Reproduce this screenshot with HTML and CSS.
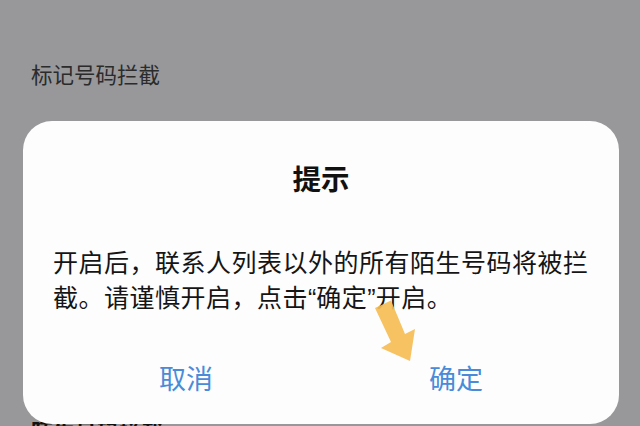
FILE: index.html
```html
<!DOCTYPE html>
<html lang="zh-CN">
<head>
<meta charset="utf-8">
<title>提示</title>
<link rel="stylesheet" href="styles.css">
</head>
<body>
<div class="screen">
  <div class="page">
    <div class="row-label">标记号码拦截</div>
    <div class="row-next">陌生号码拦截</div>
  </div>
  <div class="dialog">
    <div class="dialog-title">提示</div>
    <div class="dialog-body">开启后，联系人列表以外的所有陌生号码将被拦截。请谨慎开启，点击<span class="q">“</span>确定<span class="q">”</span>开启。</div>
    <div class="dialog-actions">
      <div class="btn">取消</div>
      <div class="btn">确定</div>
    </div>
  </div>
  <svg class="arrow" width="640" height="426" viewBox="0 0 640 426" aria-hidden="true">
    <polygon points="375,308 391,300.5 405,334 415,329 410,361 381,348 391,342" fill="#f5bd55" fill-opacity="0.92"/>
  </svg>
</div>
</body>
</html>
```

FILE: styles.css
```css
html, body {
  margin: 0;
  padding: 0;
}
body {
  font-family: "Noto Sans CJK SC", "Noto Sans", sans-serif;
  background: #98989a;
}
.screen {
  position: relative;
  width: 640px;
  height: 426px;
  overflow: hidden;
  background: #98989a;
}
.page {
  display: flex;
  flex-direction: column;
  padding: 60px 0 0 31px;
}
.row-label {
  font-size: 21.5px;
  line-height: 28px;
  color: #2b2b2c;
}
.row-next {
  margin-top: 328px;
  font-size: 22px;
  line-height: 28px;
  color: #111;
  font-weight: bold;
}
.dialog {
  position: absolute;
  left: 23px;
  top: 121px;
  width: 596px;
  height: 303px;
  background: #fdfdfd;
  border-radius: 29px;
  display: flex;
  flex-direction: column;
  box-sizing: border-box;
  padding-top: 37px;
}
.dialog-title {
  text-align: center;
  font-size: 28.5px;
  line-height: 40px;
  font-weight: bold;
  color: #111;
}
.dialog-body {
  margin-top: 46px;
  padding: 0 22px 0 30px;
  font-size: 25px;
  letter-spacing: 0.5px;
  line-height: 35px;
  color: #151515;
}
.q {
  font-family: "Liberation Sans", sans-serif;
  letter-spacing: 0;
}
.dialog-actions {
  margin-top: 31px;
  padding: 0 28px;
  display: grid;
  grid-template-columns: 1fr 1fr;
  height: 60px;
}
.btn {
  display: flex;
  align-items: center;
  justify-content: center;
  font-size: 27px;
  color: #4a8bd9;
}
.arrow {
  position: absolute;
  left: 0;
  top: 0;
}
```
